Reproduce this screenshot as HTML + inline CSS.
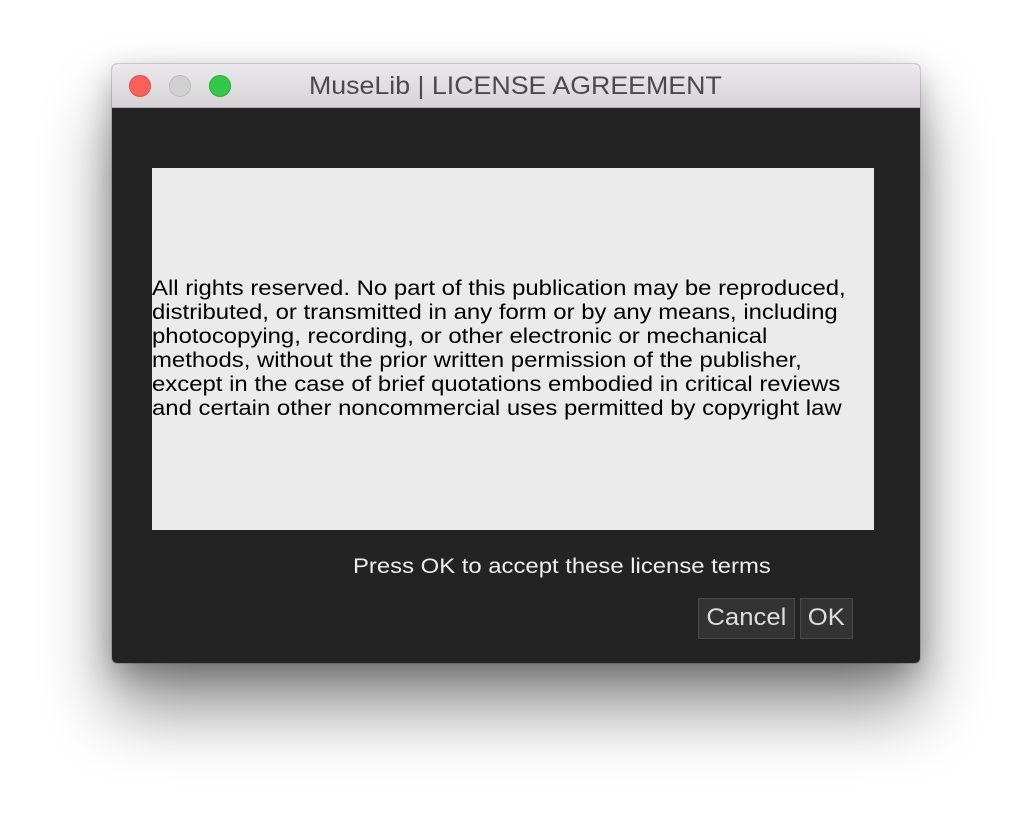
<!DOCTYPE html>
<html><head><meta charset="utf-8"><style>
body{margin:0;width:1032px;height:824px;background:#fff;position:relative;overflow:hidden;font-family:"Liberation Sans",Arial,sans-serif}
.win{position:absolute;left:112px;top:64px;width:808px;height:599px;background:#232323;border-radius:5px;box-shadow:0 45px 70px rgba(0,0,0,.45),0 10px 30px rgba(0,0,0,.25),0 0 0 1px rgba(0,0,0,.15);overflow:hidden}
.tb{position:absolute;left:0;top:0;width:808px;height:43px;background:linear-gradient(#ebe9eb,#d5d3d5);border-bottom:1px solid #b4b2b4}
.dot{position:absolute;top:11px;width:22px;height:22px;border-radius:50%;box-sizing:border-box}
.title{position:absolute;left:197px;top:8px;font-size:25px;color:#4a4a4a;white-space:nowrap;transform:scaleX(1.07);transform-origin:0 0}
.box{position:absolute;left:40px;top:104px;width:722px;height:362px;background:#ebebeb;overflow:hidden}
.txt{position:absolute;left:0;top:108px;font-size:21.5px;line-height:24px;color:#000;white-space:pre;transform:scaleX(1.112);transform-origin:0 0}
.msg{position:absolute;left:241px;top:490px;font-size:21.5px;color:#eee;white-space:nowrap;transform:scaleX(1.11);transform-origin:0 0}
.btn{position:absolute;top:534px;height:41px;background:#333;border:1px solid #4a4a4a;box-sizing:border-box;color:#ddd;font-size:24px;line-height:38px;text-align:center}
.btn span{display:inline-block;transform:scaleX(1.07)}
</style></head><body>
<div class="win">
<div class="tb">
<div class="dot" style="left:17px;background:#fc605b;border:1px solid #de4a45"></div>
<div class="dot" style="left:57px;background:#d0d0d0;border:1px solid #b8b8b8"></div>
<div class="dot" style="left:97px;background:#34c84a;border:1px solid #25a83a"></div>
<div class="title">MuseLib | LICENSE AGREEMENT</div>
</div>
<div class="box"><div class="txt">All rights reserved. No part of this publication may be reproduced,
distributed, or transmitted in any form or by any means, including
photocopying, recording, or other electronic or mechanical
methods, without the prior written permission of the publisher,
except in the case of brief quotations embodied in critical reviews
and certain other noncommercial uses permitted by copyright law</div></div>
<div class="msg">Press OK to accept these license terms</div>
<div class="btn" style="left:586px;width:97px"><span>Cancel</span></div>
<div class="btn" style="left:688px;width:53px"><span>OK</span></div>
</div>
</body></html>
